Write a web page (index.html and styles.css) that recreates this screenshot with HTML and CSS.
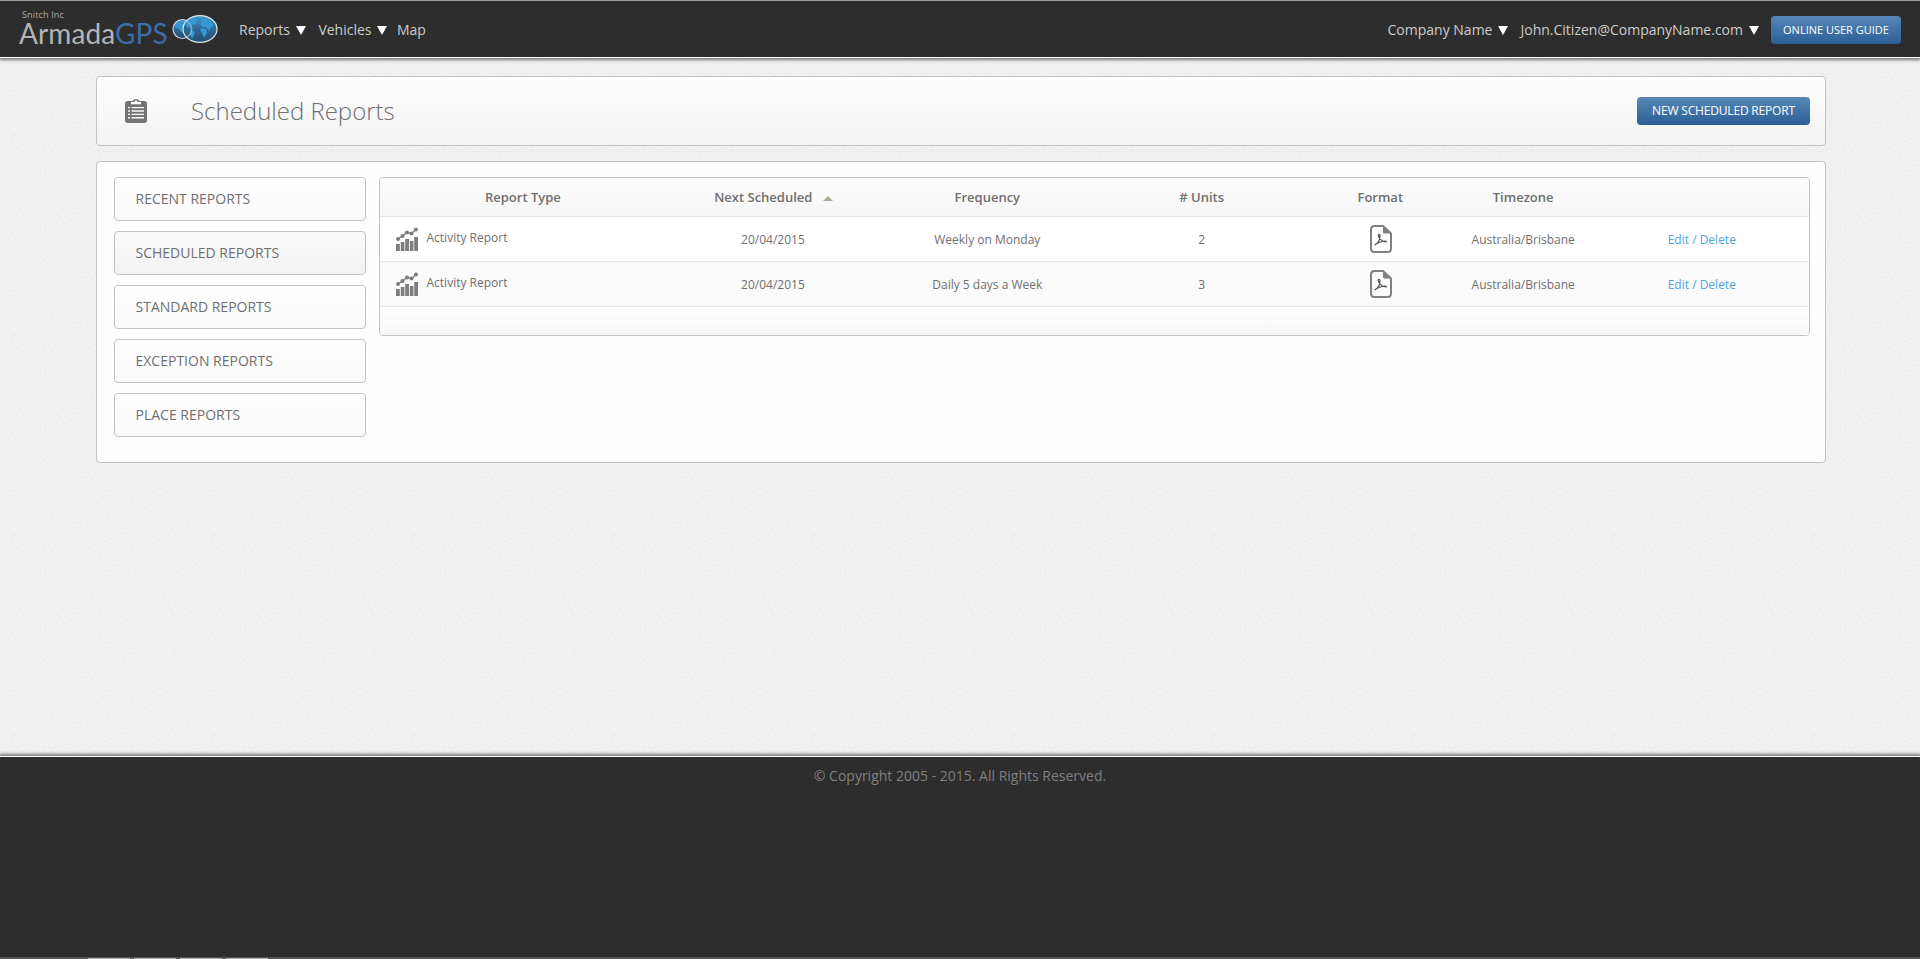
FILE: index.html
```html
<!DOCTYPE html>
<html lang="en">
<head>
  <meta charset="UTF-8" />
  <title>ArmadaGPS - Scheduled Reports</title>
  <link rel="stylesheet" href="styles.css">
</head>
<body>

  <!-- shared icons -->
  <svg class="defs" width="0" height="0">
    <symbol id="icon-chart" viewBox="0 0 22 24">
      <path d="M0 17h3.800v7H0zM4.800 15h3.600v9H4.800zM9.200 12h3.800v12H9.200zM13.900 14h3.500v10h-3.500zM18.200 10h3.800v14h-3.800z" fill="#7d7d7d"/>
      <path d="M2 12 L6.500 9 L11 5.500 L15.500 6.500 L20 2.500" fill="none" stroke="#7d7d7d" stroke-width="1.500"/>
      <g fill="#7d7d7d"><circle cx="2" cy="12" r="2"/><circle cx="6.500" cy="9" r="2"/><circle cx="11" cy="5.500" r="2"/><circle cx="15.500" cy="6.500" r="2"/><circle cx="20" cy="2.500" r="2"/></g>
    </symbol>
    <symbol id="icon-pdf" viewBox="0 0 22 28">
      <path d="M13 1H4.500Q1 1 1 4.500V23.500Q1 27 4.500 27H17.500Q21 27 21 23.500V8.500Z" fill="none" stroke="#808080" stroke-width="2"/>
      <path d="M13 1l8 7.500h-6.500Q13 8.500 13 7z" fill="#808080"/>
      <path d="M4.500 20C7.500 18.800 10 15.500 10 10.500C10 8.800 8 8.800 8.300 10.500C9 13.500 12 17 16.300 17C17 15.500 11 15.500 4.500 20Z" fill="none" stroke="#555" stroke-width="1.200"/>
    </symbol>
  </svg>

  <header class="topbar">
    <a class="logo">
      <span class="logo-text">
        <small>Snitch Inc</small>
        <b>Armada<i>GPS</i></b>
      </span>
      <svg class="globe" width="46" height="30" viewBox="0 0 46 30">
        <defs>
          <linearGradient id="sea" x1="0" y1="0" x2="0" y2="1">
            <stop offset="0" stop-color="#4399d0"/>
            <stop offset=".45" stop-color="#2f6d9b"/>
            <stop offset="1" stop-color="#234b6d"/>
          </linearGradient>
        </defs>
        <ellipse cx="10.500" cy="15" rx="9.500" ry="9.500" fill="url(#sea)" stroke="#c9d3da" stroke-width="1.200"/>
        <path d="M3 10l5-3 5 1 2 4-4 2-1 5-3-4-4-1z" fill="#3399d0"/>
        <ellipse cx="28" cy="15" rx="17" ry="13.400" fill="url(#sea)" stroke="#dfe6ea" stroke-width="1.200"/>
        <path d="M13 9l5-4 6-1 2 3-3 3-4 1-3 3-2-3zM19 16l4 2-1 3-2 4-2-5zM29 7l4-3 6 3 3 5-3 1-2 4-3-4-3 0-2-2zM30 14l4 1 1 4-3 5-2-5-2-3z" fill="#3399d0"/>
        <path d="M13.500 7a9.500 9.500 0 0 1 1.500 16.500Q20 20 20 15T15 6.600" fill="none" stroke="#8fc3e2" stroke-width=".8"/>
      </svg>
    </a>
    <nav class="menu">
      <a>Reports <span class="caret"></span></a>
      <a>Vehicles <span class="caret"></span></a>
      <a>Map</a>
    </nav>
    <nav class="menu account">
      <a>Company Name <span class="caret"></span></a>
      <a>John.Citizen@CompanyName.com <span class="caret"></span></a>
    </nav>
    <button class="btn guide">ONLINE USER GUIDE</button>
  </header>

  <main class="page">
    <section class="panel title-bar">
      <svg class="clipboard" width="22" height="24" viewBox="0 0 22 25" preserveAspectRatio="none">
        <path d="M3 2h5Q8.500 0 11 0T14 2h5q3 0 3 3v17q0 3-3 3H3q-3 0-3-3V5q0-3 3-3z" fill="#747474"/>
        <path d="M6 3v2.500h10V3h-3.500a1.500 1.500 0 0 0-3 0z" fill="#fafafa"/>
        <path d="M3 9h2M3 12.500h2M3 16h2M3 19.500h2M6.500 9H19M6.500 12.500H19M6.500 16H19M6.500 19.500H19" stroke="#fafafa" stroke-width="1.500"/>
      </svg>
      <h1>Scheduled Reports</h1>
      <button class="btn new-report">NEW SCHEDULED REPORT</button>
    </section>

    <section class="panel content">
      <ul class="side">
        <li>RECENT REPORTS</li>
        <li class="active">SCHEDULED REPORTS</li>
        <li>STANDARD REPORTS</li>
        <li>EXCEPTION REPORTS</li>
        <li>PLACE REPORTS</li>
      </ul>

      <div class="grid">
        <table>
          <thead>
            <tr>
              <th class="w20">Report Type</th>
              <th class="w15 sorted">Next Scheduled <span class="sort"></span></th>
              <th class="w15">Frequency</th>
              <th class="w15"># Units</th>
              <th class="w10">Format</th>
              <th class="w10">Timezone</th>
              <th class="w15"></th>
            </tr>
          </thead>
          <tbody>
            <tr>
              <td><div class="type"><svg width="22" height="24"><use href="#icon-chart"/></svg><span>Activity Report</span></div></td>
              <td>20/04/2015</td>
              <td>Weekly on Monday</td>
              <td>2</td>
              <td class="format"><svg class="pdf" width="22" height="28"><use href="#icon-pdf"/></svg></td>
              <td>Australia/Brisbane</td>
              <td><a>Edit / Delete</a></td>
            </tr>
            <tr>
              <td><div class="type"><svg width="22" height="24"><use href="#icon-chart"/></svg><span>Activity Report</span></div></td>
              <td>20/04/2015</td>
              <td>Daily 5 days a Week</td>
              <td>3</td>
              <td class="format"><svg class="pdf" width="22" height="28"><use href="#icon-pdf"/></svg></td>
              <td>Australia/Brisbane</td>
              <td><a>Edit / Delete</a></td>
            </tr>
          </tbody>
        </table>
        <div class="grid-foot"></div>
      </div>
    </section>
  </main>

  <footer class="footer">
    <p>© Copyright 2005 - 2015. All Rights Reserved.</p>
    <div class="dock"><span></span><span></span><span></span><span></span></div>
  </footer>

</body>
</html>
```
FILE: styles.css
```css
* { box-sizing:border-box; }
body {
  margin:0;
  height:959px;
  display:flex;
  flex-direction:column;
  overflow:hidden;
  font-family:'Open Sans', 'Noto Sans', sans-serif;
  font-size:12px;
  color:#6f6f6f;
  /* fine paper grain */
  background:#f4f4f4 url("data:image/svg+xml,%3Csvg xmlns='http://www.w3.org/2000/svg' width='200' height='200'%3E%3Cfilter id='n'%3E%3CfeTurbulence type='fractalNoise' baseFrequency='.6' numOctaves='2' stitchTiles='stitch'/%3E%3CfeColorMatrix values='0 0 0 0 0 0 0 0 0 0 0 0 0 0 0 .07 0 0 0 -.018'/%3E%3C/filter%3E%3Crect width='200' height='200' filter='url(%23n)'/%3E%3C/svg%3E");
}
.defs { position:absolute; }

/* top bar */
.topbar {
  height:58px;
  flex:none;
  display:flex;
  align-items:center;
  padding:2px 19px 0 20px;
  background:#2d2d2d;
  border-top:1px solid #999;
  border-bottom:1px solid #fff;
  box-shadow:0 1px 3px 1px #777;
}
.logo { display:flex; width:219px; height:54px; }
.logo-text { width:152px; padding-top:5px; }
.logo small {
  display:block;
  font-size:9px;
  line-height:14px;
  padding-left:2px;
  letter-spacing:.15px;
  color:#aaa;
}
.logo b {
  display:block;
  font:400 28px/22px Lato, sans-serif;
  margin-left:-1px;
  letter-spacing:.1px;
  color:#b4b4b8;
}
.logo i { font-style:normal; color:#3d6cab; }
.globe { margin-top:11px; }
.menu { display:flex; font-size:14px; line-height:20px; color:#ccc; }
.menu a { display:flex; align-items:center; margin-right:12.5px; }
.menu a:nth-child(2) { margin-right:9.5px; }
.account { margin-left:auto; }
.account a { margin-right:12px; }
.account a:nth-child(2) { margin-right:12px; }
.caret {
  margin-left:6px;
  border:5px solid transparent;
  border-top:9px solid #fff;
  border-bottom:0;
}
.btn {
  border:0;
  padding:0;
  height:28px;
  border-radius:4px;
  color:#fff;
  font-family:'Open Sans', sans-serif;
  background:linear-gradient(#5787b8, #2c5f97);
}
.guide { width:130px; padding-bottom:2px; font-size:11px; }
.new-report {
  width:173px;
  padding-bottom:2px;
  font-size:12px;
  letter-spacing:-.18px;
  margin-left:auto;
}

/* page */
.page { width:1730px; margin:18px 0 0 96px; }
.panel {
  border:1px solid #c3c3c3;
  border-radius:4px;
  background:#fefefe;
}
.title-bar {
  height:70px;
  display:flex;
  align-items:center;
  padding:0 15px 0 28px;
  margin-bottom:15px;
  background:linear-gradient(#fdfdfd, #f3f3f3);
}
.title-bar h1 {
  margin:0 0 0 44px;
  padding-bottom:2px;
  font-size:24px;
  font-weight:300;
}
.content {
  height:302px;
  display:flex;
  align-items:flex-start;
  gap:13px;
  padding:15px 15px 0 17px;
}
.side {
  list-style:none;
  margin:0;
  padding:0;
  width:252px;
  display:flex;
  flex-direction:column;
  gap:10px;
}
.side li {
  height:44px;
  line-height:42px;
  padding-left:20.5px;
  font-size:14px;
  border:1px solid #c3c3c3;
  border-radius:4px;
  background:linear-gradient(#fff, #fafafa);
}
.side .active { background:linear-gradient(#fafafa, #f3f3f3); }

/* report table */
.grid {
  flex:1;
  height:159px;
  border:1px solid #c3c3c3;
  border-radius:4px;
  overflow:hidden;
}
table {
  width:100%;
  border-collapse:separate;
  border-spacing:0;
  table-layout:fixed;
  text-align:center;
}
th, td { padding:0; border-bottom:1px solid #e5e5e5; }
th { height:39px; font-size:13px; font-weight:600; }
td { height:45px; background:#fff; }
thead { background:linear-gradient(#fcfcfc, #f6f6f6); }
tbody tr:nth-child(even) td { background:#fafafa; }
td a { color:#4ea3df; }
.w20 { width:20%; }
.w15 { width:15%; }
.w10 { width:10%; }
.sorted { padding-left:1px; }
.sort {
  display:inline-block;
  margin:0 0 1px 7px;
  border:5px solid transparent;
  border-top:0;
  border-bottom-color:#aaa799;
}
.type { display:flex; padding-left:16px; gap:8.5px; }
.type span { margin-top:2px; line-height:18px; }
.format { padding-left:1px; }
.pdf { display:block; margin:0 auto; }
.grid-foot { height:28px; background:linear-gradient(#fff, #f6f6f6); }

/* footer */
.footer {
  flex:none;
  height:203px;
  margin-top:auto;
  display:flex;
  flex-direction:column;
  justify-content:space-between;
  background:#2d2d2d;
  border-top:1px solid #fff;
  box-shadow:0 -1px 3px 1px #777;
  color:#808080;
}
.footer p { margin:9px 0 0; font-size:14px; line-height:20px; text-align:center; }
.dock {
  display:flex;
  gap:4px;
  height:2px;
  padding-left:88px;
  background:#565656;
}
.dock span { width:42px; border-bottom:1px solid #aaa; }
```
